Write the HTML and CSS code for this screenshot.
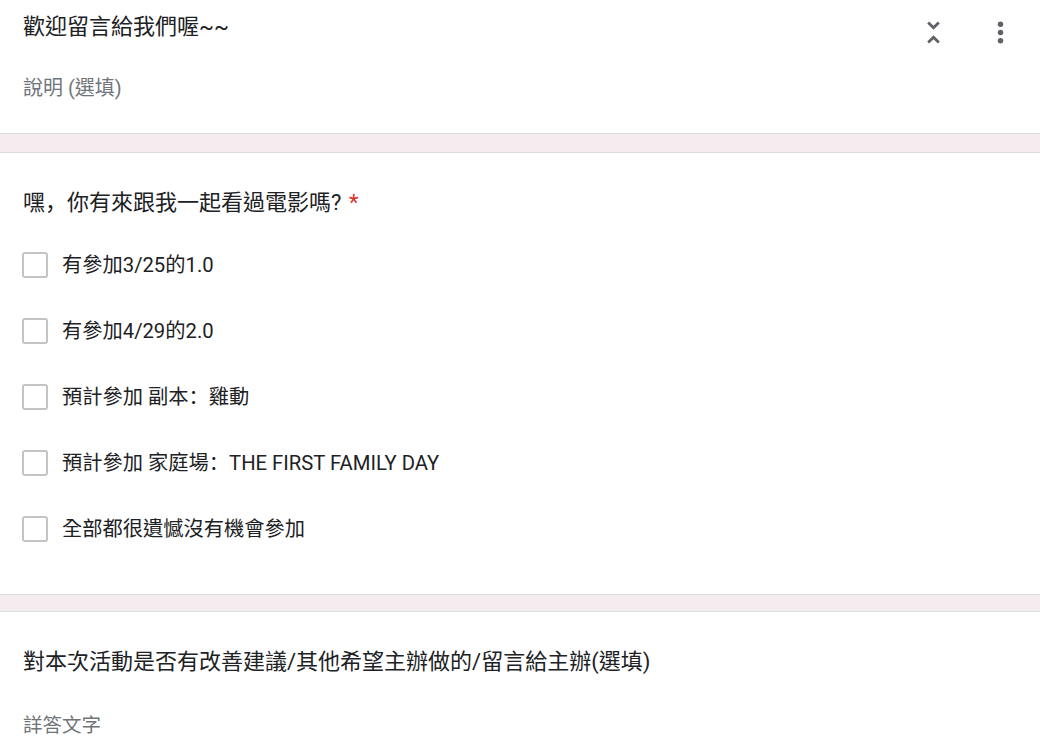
FILE: index.html
```html
<!DOCTYPE html>
<html lang="zh-Hant">
<head>
<meta charset="utf-8">
<title>表單</title>
<link rel="stylesheet" href="styles.css">
</head>
<body>
<div class="page">
  <section class="card card-header">
    <div class="header-row">
      <div class="title">歡迎留言給我們喔~~</div>
      <div class="actions">
        <button class="icon-btn" aria-label="收合">
          <svg viewBox="0 0 24 24" width="33" height="33"><path fill="#5f6368" d="M7.41 18.59L8.83 20 12 16.83 15.17 20l1.41-1.41L12 14l-4.59 4.59zm9.18-13.18L15.17 4 12 7.17 8.83 4 7.41 5.41 12 10l4.59-4.59z"/></svg>
        </button>
        <button class="icon-btn" aria-label="更多">
          <svg viewBox="0 0 24 24" width="33" height="33"><circle cx="12" cy="6" r="2" fill="#5f6368"/><circle cx="12" cy="12" r="2" fill="#5f6368"/><circle cx="12" cy="18" r="2" fill="#5f6368"/></svg>
        </button>
      </div>
    </div>
    <div class="desc">說明 (選填)</div>
  </section>
  <div class="band band-a"></div>
  <section class="card card-q">
    <div class="question">嘿<span class="punct" lang="zh-Hans">，</span>你有來跟我一起看過電影嗎? <span class="req">*</span></div>
    <ul class="options">
      <li class="option"><span class="box"></span><span class="label">有參加3/25的1.0</span></li>
      <li class="option"><span class="box"></span><span class="label">有參加4/29的2.0</span></li>
      <li class="option"><span class="box"></span><span class="label">預計參加 副本<span class="punct" lang="zh-Hans">：</span>雞動</span></li>
      <li class="option"><span class="box"></span><span class="label">預計參加 家庭場<span class="punct" lang="zh-Hans">：</span>THE FIRST FAMILY DAY</span></li>
      <li class="option"><span class="box"></span><span class="label">全部都很遺憾沒有機會參加</span></li>
    </ul>
  </section>
  <div class="band band-b"></div>
  <section class="card card-text">
    <div class="question">對本次活動是否有改善建議/其他希望主辦做的/留言給主辦(選填)</div>
    <div class="placeholder">詳答文字</div>
  </section>
</div>
</body>
</html>
```
FILE: styles.css
```css
html, body {
  margin: 0;
  padding: 0;
  height: 744px;
  overflow: hidden;
  background: #ffffff;
}
body {
  font-family: "Roboto", "Noto Sans CJK TC", "Noto Sans", sans-serif;
  color: #202124;
}
.page {
  width: 1040px;
}
.card {
  background: #ffffff;
  padding-left: 23px;
}
.card-header {
  height: 133px;
  border-bottom: 1px solid #dadce0;
  box-sizing: content-box;
}
.band {
  background: #f4ecee;
}
.band-a { height: 18px; }
.band-b { height: 16px; }
.card-q {
  border-top: 1px solid #dadce0;
  border-bottom: 1px solid #dadce0;
  padding-top: 34px;
  box-sizing: border-box;
  height: 443px;
}
.card-text {
  border-top: 1px solid #dadce0;
  padding-top: 34px;
}
.header-row {
  display: flex;
  align-items: flex-start;
}
.title {
  flex: 1;
  font-size: 22px;
  line-height: 32px;
  margin-top: 11px;
}
.actions {
  display: flex;
  margin-top: 16px;
  margin-right: 6px;
}
.icon-btn {
  width: 67px;
  height: 33px;
  padding: 0;
  border: none;
  background: transparent;
  display: flex;
  align-items: center;
  justify-content: center;
}
.icon-btn svg { display: block; }
.desc {
  font-size: 20px;
  line-height: 28px;
  margin-top: 25px;
  color: #70757a;
}
.question {
  font-size: 22px;
  line-height: 32px;
  height: 32px;
}
.punct {
  font-family: "Noto Sans CJK SC", sans-serif;
  line-height: 1;
}
.req {
  color: #d93025;
  margin-left: 2px;
}
.options {
  list-style: none;
  margin: 13px 0 0 0;
  padding: 0;
}
.option {
  height: 66px;
  display: flex;
  align-items: center;
}
.box {
  width: 26px;
  height: 26px;
  box-sizing: border-box;
  border: 2px solid #c4c4c4;
  border-radius: 3px;
  margin-left: -1px;
  margin-right: 14px;
  flex: none;
}
.label {
  font-size: 20.25px;
  line-height: 28px;
}
.placeholder {
  font-size: 19.5px;
  line-height: 28px;
  margin-top: 34px;
  color: #70757a;
}
```
